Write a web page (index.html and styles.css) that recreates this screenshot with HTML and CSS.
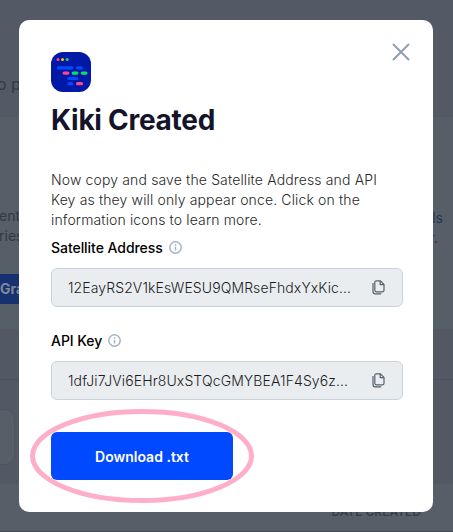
FILE: index.html
```html
<!DOCTYPE html>
<html lang="en">
<head>
<meta charset="utf-8">
<title>Kiki Created</title>
<link rel="stylesheet" href="styles.css">
</head>
<body>
<main class="page" aria-hidden="true">
  <section class="intro"><p>o p</p></section>
  <section class="cards">
    <div class="card-text"><p>ent<br>ries</p><p class="right">ls<br><span class="line-end">r.</span></p></div>
    <div class="grant">Gra</div>
  </section>
  <section class="list">
    <div class="list-head"></div>
    <div class="search"></div>
  </section>
  <section class="table-head">DATE CREATED</section>
</main>

<div class="modal" role="dialog" aria-labelledby="title">
  <header class="modal-head">
    <svg class="logo" width="40" height="40" viewBox="0 0 40 40">
      <rect width="40" height="40" rx="12" fill="#0218a7"/>
      <circle cx="7" cy="7.5" r="1.5" fill="#ff458b"/>
      <circle cx="11.5" cy="7.5" r="1.5" fill="#ffc600"/>
      <circle cx="16.2" cy="7.5" r="1.5" fill="#00e366"/>
      <g stroke-width="3.2" stroke-linecap="round">
        <path stroke="#0149ff" d="M7.4 15.8H20.8M26.6 15.8H30.4M17.9 26.5H25.6M17.9 31.7H20.6"/>
        <path stroke="#ff458b" d="M13.1 21.1H16.8M26.6 31.7H30.5"/>
        <path stroke="#00e366" d="M22.2 21.1H25.9M31.4 21.1H34.9"/>
      </g>
    </svg>
    <svg class="close" width="18" height="18" viewBox="0 0 18 18"><path d="M1.5 1.5l15 15M16.5 1.5l-15 15" stroke="#929fb1" stroke-width="2" stroke-linecap="round"/></svg>
  </header>
  <h1 id="title">Kiki Created</h1>
  <p class="description">Now copy and save the Satellite Address and API<br>Key as they will only appear once. Click on the<br>information icons to learn more.</p>

  <div class="label"><span>Satellite Address</span>
    <svg class="info" width="13" height="13" viewBox="0 0 13 13"><circle cx="6.5" cy="6.5" r="5.7"/><path d="M6.5 5.8v3.7M6.5 3.3v1.4"/></svg>
  </div>
  <div class="field">
    <span class="address">12EayRS2V1kEsWESU9QMRseFhdxYxKic...</span>
    <svg class="copy" width="13" height="15" viewBox="0 0 13 15"><path d="M4.3.8H8.5L12 4.3V10.3Q12 11.8 10.5 11.8H4.3Q2.8 11.8 2.8 10.3V2.3Q2.8.8 4.3.8ZM8.2 1V4.6H11.8M1 3V11.6Q1 13.9 3.3 13.9H9.2"/></svg>
  </div>

  <div class="label"><span>API Key</span>
    <svg class="info" width="13" height="13" viewBox="0 0 13 13"><circle cx="6.5" cy="6.5" r="5.7"/><path d="M6.5 5.8v3.7M6.5 3.3v1.4"/></svg>
  </div>
  <div class="field">
    <span class="key">1dfJi7JVi6EHr8UxSTQcGMYBEA1F4Sy6z...</span>
    <svg class="copy" width="13" height="15" viewBox="0 0 13 15"><path d="M4.3.8H8.5L12 4.3V10.3Q12 11.8 10.5 11.8H4.3Q2.8 11.8 2.8 10.3V2.3Q2.8.8 4.3.8ZM8.2 1V4.6H11.8M1 3V11.6Q1 13.9 3.3 13.9H9.2"/></svg>
  </div>
  <button class="download" type="button">Download .txt</button>
</div>
<svg class="highlight" width="226" height="96" viewBox="0 0 226 96"><ellipse cx="113" cy="48" rx="109.5" ry="44.5" fill="none" stroke="#ffaec9" stroke-width="5"/></svg>
</body>
</html>
```
FILE: styles.css
```css
* { box-sizing: border-box; margin: 0; }
body { position: relative; width: 453px; height: 532px; overflow: hidden; background: #565e67; font-family: Inter, "Liberation Sans", sans-serif; }
.page { height: 532px; color: #2f3a46; }
.intro { height: 117px; padding-top: 74px; background: #535a66; font-size: 16px; line-height: 20px; }
.intro p { margin-left: -3px; }
.cards { height: 212px; padding-top: 89px; background: #565e67; }
.card-text { display: flex; justify-content: space-between; height: 68px; padding-right: 10px; font-size: 14px; line-height: 20px; }
.card-text p { margin-left: -1px; }
.card-text .right { padding-top: 2px; text-align: right; color: #26394f; }
.line-end { margin-right: 5px; }
.grant { width: 60px; height: 30px; background: #17306f; color: #7d889c; font-size: 14px; font-weight: 700; line-height: 30px; }
.list { height: 155px; background: #525965; }
.list-head { height: 51px; border-bottom: 1px solid #49535f; }
.search { width: 45px; height: 56px; margin: 29px 0 0 -30px; border: 1px solid #4b565f; border-radius: 10px; background: #565e67; }
.table-head { height: 48px; padding: 18px 32px 0 0; border-bottom: 1px solid #484b58; color: #353f4b; font-size: 12px; font-weight: 600; line-height: 20px; text-align: right; }

.modal { position: absolute; top: 20px; left: 19px; width: 414px; height: 492px; padding: 32px 30px 32px 32px; border-radius: 10px; background: #fff; }
.modal-head { display: flex; justify-content: space-between; height: 40px; }
.close { margin: -9px -7px 0 0; }
h1 { margin-top: 11px; color: #14142b; font-size: 28px; font-weight: 700; line-height: 34px; letter-spacing: -.27px; white-space: nowrap; }
.description { height: 60px; margin-top: 33px; color: #282828; font-size: 14px; font-weight: 350; line-height: 20px; letter-spacing: .14px; white-space: nowrap; }
.label { display: flex; align-items: center; gap: 6px; height: 20px; margin-top: 7px; color: #000; font-size: 14px; font-weight: 500; letter-spacing: -.05px; white-space: nowrap; }
.info { fill: none; stroke: #a4b3c5; stroke-width: 1.5; }
.field { display: flex; align-items: center; justify-content: space-between; width: 352px; height: 39px; margin-top: 11px; padding: 0 17px 0 16px; border: 1px solid #c8d3de; border-radius: 6px; background: #e9edf0; color: #1c1c1c; font-size: 14px; font-weight: 350; white-space: nowrap; }
.field + .label { margin-top: 23px; }
.address { letter-spacing: .1px; }
.key { letter-spacing: .11px; }
.copy { fill: none; stroke: #56606d; stroke-width: 1.2; stroke-linejoin: round; }
.download { display: block; width: 182px; height: 48px; margin-top: 32px; padding: 2px 0 0; border: 0; border-radius: 6px; background: #0149ff; color: #fff; font: 600 14px/46px Inter, "Liberation Sans", sans-serif; }
.highlight { position: absolute; top: 408px; left: 29px; }
```
